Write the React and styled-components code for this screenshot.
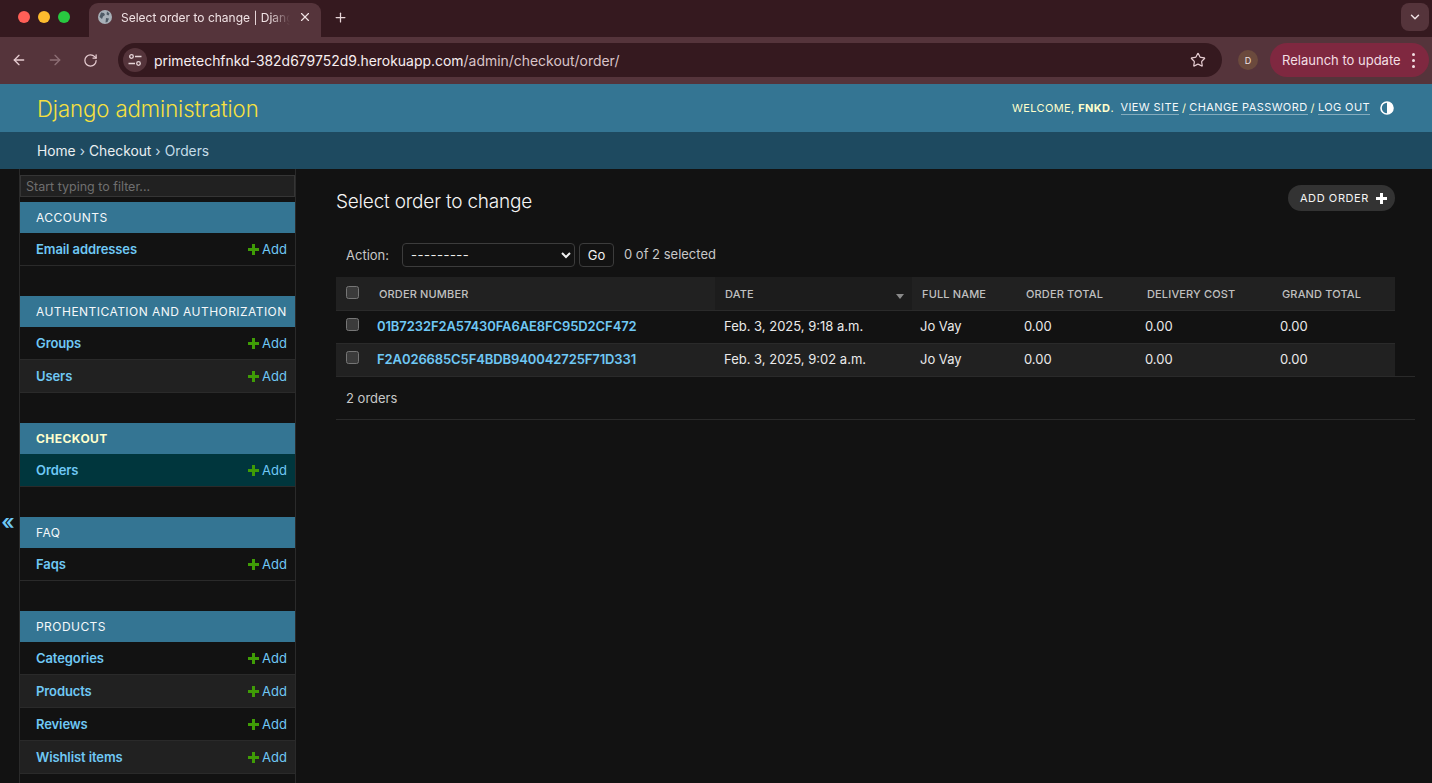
import styled, { createGlobalStyle } from "styled-components"
import { ArrowLeft, ArrowRight, RotateCw, Star, Plus, X, ChevronDown } from "lucide-react"

const GlobalStyle = createGlobalStyle`
    html, body {
        margin: 0;
        height: 100%;
        overflow: hidden;
        background: #121212;
        font-family: Inter, "Noto Sans", sans-serif;
    }

    * {
        box-sizing: border-box;
    }
`

const Page = styled.div`
    display: flex;
    flex-direction: column;
    height: 783px;
    overflow: hidden;
`

const TabStrip = styled.div`
    display: flex;
    align-items: flex-end;
    height: 37px;
    background: #35191f;
    flex-shrink: 0;
`

const Lights = styled.div`
    display: flex;
    gap: 8px;
    padding: 0 0 14px 18px;
    width: 89px;
`

const Light = styled.span`
    width: 12px;
    height: 12px;
    border-radius: 50%;
    background: ${(p) => p.$color};
`

const Tab = styled.div`
    display: flex;
    align-items: center;
    width: 232px;
    height: 34px;
    padding: 0 9px 6px 9px;
    background: #55343b;
    border-radius: 9px 9px 0 0;
    color: #f0e2e4;
    font-size: 12px;
`

const TabTitle = styled.span`
    flex: 1;
    margin: 0 8px 0 9px;
    white-space: nowrap;
    overflow: hidden;
    -webkit-mask-image: linear-gradient(to right, #000 88%, transparent 100%);
    mask-image: linear-gradient(to right, #000 88%, transparent 100%);
`

const NewTab = styled.div`
    display: flex;
    margin: 0 0 12px 12px;
    color: #e8d6d9;
`

const TabMenu = styled.div`
    display: flex;
    align-items: center;
    justify-content: center;
    width: 28px;
    height: 28px;
    margin: 0 3px 6px auto;
    border-radius: 8px;
    background: #55343b;
    color: #f0e2e4;
`

const Toolbar = styled.div`
    display: flex;
    align-items: center;
    height: 47px;
    padding: 0 3px 1px 11px;
    background: #55343b;
    flex-shrink: 0;
`

const NavButton = styled.div`
    display: flex;
    width: 36px;
    color: ${(p) => (p.$dim ? "#8d6f75" : "#e6ccd1")};
`

const Omnibox = styled.div`
    display: flex;
    align-items: center;
    width: 1105px;
    height: 34px;
    margin-left: -1px;
    padding: 0 16px 0 5px;
    border-radius: 17px;
    background: #35191f;
    color: #f2e6e8;
    font-size: 13.95px;
`

const SiteInfo = styled.span`
    display: flex;
    align-items: center;
    justify-content: center;
    width: 24px;
    height: 24px;
    border-radius: 50%;
    background: #55343b;
    margin-right: 7px;
`

const UrlHost = styled.span`
    color: #f7eef0;
`

const UrlPath = styled.span`
    color: #d9c4c8;
`

const StarWrap = styled.span`
    display: flex;
    margin-left: auto;
    color: #e6ccd1;
`

const Avatar = styled.div`
    display: flex;
    align-items: center;
    justify-content: center;
    width: 20px;
    height: 20px;
    margin: 0 12px 0 16px;
    border-radius: 50%;
    background: #6b4a3d;
    color: #f0e2e4;
    font-size: 9px;
`

const Relaunch = styled.div`
    display: flex;
    align-items: center;
    justify-content: space-between;
    width: 159px;
    height: 34px;
    padding: 0 14px 0 12px;
    border-radius: 17px;
    background: #7f2840;
    color: #f3dfe3;
    font-size: 13px;
    white-space: nowrap;
`

const Dots = styled.span`
    display: flex;
    flex-direction: column;
    gap: 3px;

    i {
        display: block;
        width: 3px;
        height: 3px;
        border-radius: 50%;
        background: #f3dfe3;
    }
`

const Header = styled.header`
    display: flex;
    align-items: center;
    justify-content: space-between;
    height: 48px;
    padding: 0 38px 0 37px;
    background: #347593;
    flex-shrink: 0;
`

const Branding = styled.h1`
    margin: 0;
    color: #f7e03f;
    font-size: 22.2px;
    font-weight: 300;
    letter-spacing: -0.1px;
`

const UserTools = styled.div`
    display: flex;
    align-items: center;
    padding-bottom: 1px;
    color: #ffffcc;
    font-size: 11px;
    letter-spacing: 0.4px;
    text-transform: uppercase;

    strong {
        font-weight: 700;
    }
`

const ToolLink = styled.a`
    margin: 0 3px;
    color: #f4f9fb;
    border-bottom: 1px solid rgba(255, 255, 255, 0.4);
`

const ThemeToggle = styled.svg`
    margin-left: 7px;
`

const Breadcrumbs = styled.nav`
    display: flex;
    align-items: center;
    gap: 4px;
    height: 37px;
    padding: 0 37px;
    background: #1e4a60;
    color: #c4dce8;
    font-size: 13.8px;
    flex-shrink: 0;
`

const Crumb = styled.a`
    color: #e9eff2;
`

const Body = styled.div`
    display: flex;
    flex: 1;
    min-height: 0;
`

const Toggle = styled.div`
    display: flex;
    align-items: center;
    justify-content: center;
    width: 20px;
    padding: 90px 3px 0 0;
    color: #6fc8f5;
    font-size: 21px;
    font-weight: 600;
    background: #121212;
    border-right: 1px solid #2a2a2a;
    flex-shrink: 0;
`

const Sidebar = styled.aside`
    width: 276px;
    padding-top: 6px;
    border-right: 1px solid #2a2a2a;
    flex-shrink: 0;
    overflow: hidden;
`

const Filter = styled.input`
    display: block;
    width: 100%;
    height: 22px;
    margin-bottom: 5px;
    padding: 0 5px;
    background: #212121;
    border: 1px solid #353535;
    border-radius: 0;
    color: #eee;
    font-family: inherit;
    font-size: 12.5px;

    &::placeholder {
        color: #6f6f6f;
        opacity: 1;
    }
`

const AppSection = styled.section`
    margin-bottom: 30px;
`

const Caption = styled.div`
    display: flex;
    align-items: center;
    height: 31px;
    padding-left: 16px;
    background: #347593;
    color: ${(p) => (p.$active ? "#ffffcc" : "#f5f8fa")};
    font-size: 12px;
    font-weight: ${(p) => (p.$active ? 700 : 400)};
    letter-spacing: 0.45px;
    white-space: nowrap;
`

const ModelRow = styled.div`
    display: flex;
    align-items: center;
    justify-content: space-between;
    height: 33px;
    padding: 0 8px 0 16px;
    border-bottom: 1px solid #2a2a2a;
    background: ${(p) => (p.$active ? "#00363d" : p.$alt ? "#212121" : "#121212")};
    color: #6fc8f5;
    font-size: 13px;
`

const ModelName = styled.a`
    font-weight: 600;
    letter-spacing: -0.1px;
`

const AddLink = styled.a`
    display: flex;
    align-items: center;
    gap: 3px;
    color: #6fc8f5;
`

const Main = styled.main`
    flex: 1;
    min-width: 0;
    padding: 16px 17px 0 40px;
`

const TitleRow = styled.div`
    display: flex;
    align-items: flex-start;
    justify-content: space-between;
    padding-right: 20px;
    height: 58px;
`

const Title = styled.h2`
    margin: 5px 0 0;
    color: #f5f5f5;
    font-size: 19px;
    font-weight: 300;
    letter-spacing: -0.2px;
    line-height: 24px;
`

const AddButton = styled.a`
    display: flex;
    align-items: center;
    gap: 7px;
    height: 26px;
    padding: 0 8px 0 12px;
    border-radius: 13px;
    background: #333;
    color: #f5f5f5;
    font-size: 11px;
    font-weight: 400;
    letter-spacing: 0.6px;
`

const Actions = styled.div`
    display: flex;
    align-items: center;
    height: 24px;
    margin-bottom: 10px;
    padding-left: 10px;
    color: #c8c8c8;
    font-size: 13px;
`

const ActionLabel = styled.span`
    width: 56px;
`

const ActionSelect = styled.select`
    width: 173px;
    height: 24px;
    padding: 0 4px;
    background: #121212;
    border: 1px solid #3c3c3c;
    border-radius: 4px;
    color: #f0f0f0;
    font-family: inherit;
    font-size: 13px;
    letter-spacing: 0.5px;
    color-scheme: dark;
`

const GoButton = styled.button`
    width: 35px;
    height: 24px;
    margin: 0 10px 0 4px;
    padding: 0;
    background: #121212;
    border: 1px solid #3c3c3c;
    border-radius: 4px;
    color: #f0f0f0;
    font-family: inherit;
    font-size: 13px;
`

const Counter = styled.span`
    padding-bottom: 2px;
`

const Table = styled.table`
    width: 1059px;
    table-layout: fixed;
    border-collapse: collapse;
`

const Th = styled.th`
    height: 33px;
    padding: 2px 0 0 ${(p) => p.$pad || 10}px;
    background: ${(p) => (p.$sorted ? "#1c1c1c" : "#212121")};
    border-bottom: 1px solid #2a2a2a;
    color: #c0c0c0;
    font-size: 11px;
    font-weight: 500;
    letter-spacing: 0.15px;
    text-align: left;
    position: relative;
`

const SortArrow = styled.span`
    position: absolute;
    right: 8px;
    top: 17px;
    width: 0;
    height: 0;
    border-left: 4.5px solid transparent;
    border-right: 4.5px solid transparent;
    border-top: 5px solid #8a8a8a;
`

const Td = styled.td`
    height: 33px;
    padding: 0 0 2px ${(p) => p.$pad || 9}px;
    background: ${(p) => (p.$alt ? "#212121" : "#121212")};
    border-bottom: 1px solid #2a2a2a;
    color: #eaeaea;
    font-size: 13px;
    white-space: nowrap;
`

const OrderLink = styled.a`
    color: #6fc8f5;
    font-weight: 600;
    letter-spacing: -0.1px;
`

const Check = styled.span`
    display: block;
    width: 13px;
    height: 13px;
    margin-bottom: ${(p) => (p.$head ? 4 : 2)}px;
    background: #3b3b3b;
    border: 1px solid #767676;
    border-radius: 2.5px;
`

const Paginator = styled.div`
    display: flex;
    align-items: center;
    height: 44px;
    padding: 1px 0 0 10px;
    border-top: 1px solid #2a2a2a;
    border-bottom: 1px solid #2a2a2a;
    margin-top: -1px;
    color: #c8c8c8;
    font-size: 13px;
`

const sections = [
    { name: "ACCOUNTS", models: ["Email addresses"] },
    { name: "AUTHENTICATION AND AUTHORIZATION", models: ["Groups", "Users"] },
    { name: "CHECKOUT", active: true, models: ["Orders"] },
    { name: "FAQ", models: ["Faqs"] },
    { name: "PRODUCTS", models: ["Categories", "Products", "Reviews", "Wishlist items"] },
]

const orders = [
    { id: "01B7232F2A57430FA6AE8FC95D2CF472", date: "Feb. 3, 2025, 9:18 a.m." },
    { id: "F2A026685C5F4BDB940042725F71D331", date: "Feb. 3, 2025, 9:02 a.m." },
]

const widths = [31, 348, 197, 102, 121, 135, 125]

const PlusIcon = ({ color, size = 11 }) => (
    <svg width={size} height={size} viewBox="0 0 11 11">
        <path d="M4 0h3v4h4v3H7v4H4V7H0V4h4z" fill={color} />
    </svg>
)

const App = () => {
    return (
        <Page>
            <GlobalStyle />
            <TabStrip>
                <Lights>
                    <Light $color="#ff5f57" />
                    <Light $color="#febc2e" />
                    <Light $color="#28c840" />
                </Lights>
                <Tab>
                    <svg width="14" height="14" viewBox="0 0 14 14">
                        <circle cx="7" cy="7" r="7" fill="#a8b0b8" />
                        <path d="M3 2.5l3 .5 1 2-2 1.5-1 2.5-2.5-2zM9 1.5l2.5 2-1 2-2-1zM8 8l3 .5-1.5 3.5-2 .5z" fill="#4f5a66" />
                    </svg>
                    <TabTitle>Select order to change | Django site admin</TabTitle>
                    <X size={14} strokeWidth={2} />
                </Tab>
                <NewTab>
                    <Plus size={15} strokeWidth={2} />
                </NewTab>
                <TabMenu>
                    <ChevronDown size={14} strokeWidth={2.5} />
                </TabMenu>
            </TabStrip>
            <Toolbar>
                <NavButton>
                    <ArrowLeft size={16} strokeWidth={2} />
                </NavButton>
                <NavButton $dim>
                    <ArrowRight size={16} strokeWidth={2} />
                </NavButton>
                <NavButton>
                    <RotateCw size={15} strokeWidth={2} />
                </NavButton>
                <Omnibox>
                    <SiteInfo>
                        <svg width="14" height="14" viewBox="0 0 14 14" fill="none" stroke="#e6d5d8" strokeWidth="1.3">
                            <circle cx="3.5" cy="3.5" r="1.8" />
                            <path d="M7 3.5h6.5M0.5 10.5h6.5" />
                            <circle cx="10.5" cy="10.5" r="1.8" />
                        </svg>
                    </SiteInfo>
                    <UrlHost>primetechfnkd-382d679752d9.herokuapp.com</UrlHost>
                    <UrlPath>/admin/checkout/order/</UrlPath>
                    <StarWrap>
                        <Star size={16} strokeWidth={1.8} />
                    </StarWrap>
                </Omnibox>
                <Avatar>D</Avatar>
                <Relaunch>
                    Relaunch to update
                    <Dots>
                        <i />
                        <i />
                        <i />
                    </Dots>
                </Relaunch>
            </Toolbar>
            <Header>
                <Branding>Django administration</Branding>
                <UserTools>
                    Welcome,&nbsp;<strong>fnkd</strong>.&nbsp;
                    <ToolLink>View site</ToolLink>/
                    <ToolLink>Change password</ToolLink>/
                    <ToolLink>Log out</ToolLink>
                    <ThemeToggle width="14" height="14" viewBox="0 0 14 14">
                        <circle cx="7" cy="7" r="6" fill="none" stroke="#fff" strokeWidth="1.6" />
                        <path d="M7 1a6 6 0 0 1 0 12z" fill="#fff" />
                    </ThemeToggle>
                </UserTools>
            </Header>
            <Breadcrumbs>
                <Crumb>Home</Crumb>›<Crumb>Checkout</Crumb>›<span>Orders</span>
            </Breadcrumbs>
            <Body>
                <Toggle>«</Toggle>
                <Sidebar>
                    <Filter placeholder="Start typing to filter..." />
                    {sections.map((section) => (
                        <AppSection key={section.name}>
                            <Caption $active={section.active}>{section.name}</Caption>
                            {section.models.map((model, i) => (
                                <ModelRow key={model} $alt={i % 2 === 1} $active={section.active}>
                                    <ModelName>{model}</ModelName>
                                    <AddLink>
                                        <PlusIcon color="#3f9c06" />
                                        Add
                                    </AddLink>
                                </ModelRow>
                            ))}
                        </AppSection>
                    ))}
                </Sidebar>
                <Main>
                    <TitleRow>
                        <Title>Select order to change</Title>
                        <AddButton>
                            ADD ORDER
                            <PlusIcon color="#fff" />
                        </AddButton>
                    </TitleRow>
                    <Actions>
                        <ActionLabel>Action:</ActionLabel>
                        <ActionSelect defaultValue="">
                            <option value="">---------</option>
                        </ActionSelect>
                        <GoButton>Go</GoButton>
                        <Counter>0 of 2 selected</Counter>
                    </Actions>
                    <Table>
                        <colgroup>
                            {widths.map((w, i) => (
                                <col key={i} style={{ width: w }} />
                            ))}
                        </colgroup>
                        <thead>
                            <tr>
                                <Th>
                                    <Check $head />
                                </Th>
                                <Th $pad={12}>ORDER NUMBER</Th>
                                <Th $sorted>
                                    DATE
                                    <SortArrow />
                                </Th>
                                <Th>FULL NAME</Th>
                                <Th $pad={12}>ORDER TOTAL</Th>
                                <Th $pad={12}>DELIVERY COST</Th>
                                <Th $pad={12}>GRAND TOTAL</Th>
                            </tr>
                        </thead>
                        <tbody>
                            {orders.map((order, i) => (
                                <tr key={order.id}>
                                    <Td $alt={i === 1} $pad={10}>
                                        <Check />
                                    </Td>
                                    <Td $alt={i === 1} $pad={10}>
                                        <OrderLink>{order.id}</OrderLink>
                                    </Td>
                                    <Td $alt={i === 1}>{order.date}</Td>
                                    <Td $alt={i === 1} $pad={8}>Jo Vay</Td>
                                    <Td $alt={i === 1} $pad={10}>0.00</Td>
                                    <Td $alt={i === 1} $pad={10}>0.00</Td>
                                    <Td $alt={i === 1} $pad={10}>0.00</Td>
                                </tr>
                            ))}
                        </tbody>
                    </Table>
                    <Paginator>2 orders</Paginator>
                </Main>
            </Body>
        </Page>
    )
}

export default App
